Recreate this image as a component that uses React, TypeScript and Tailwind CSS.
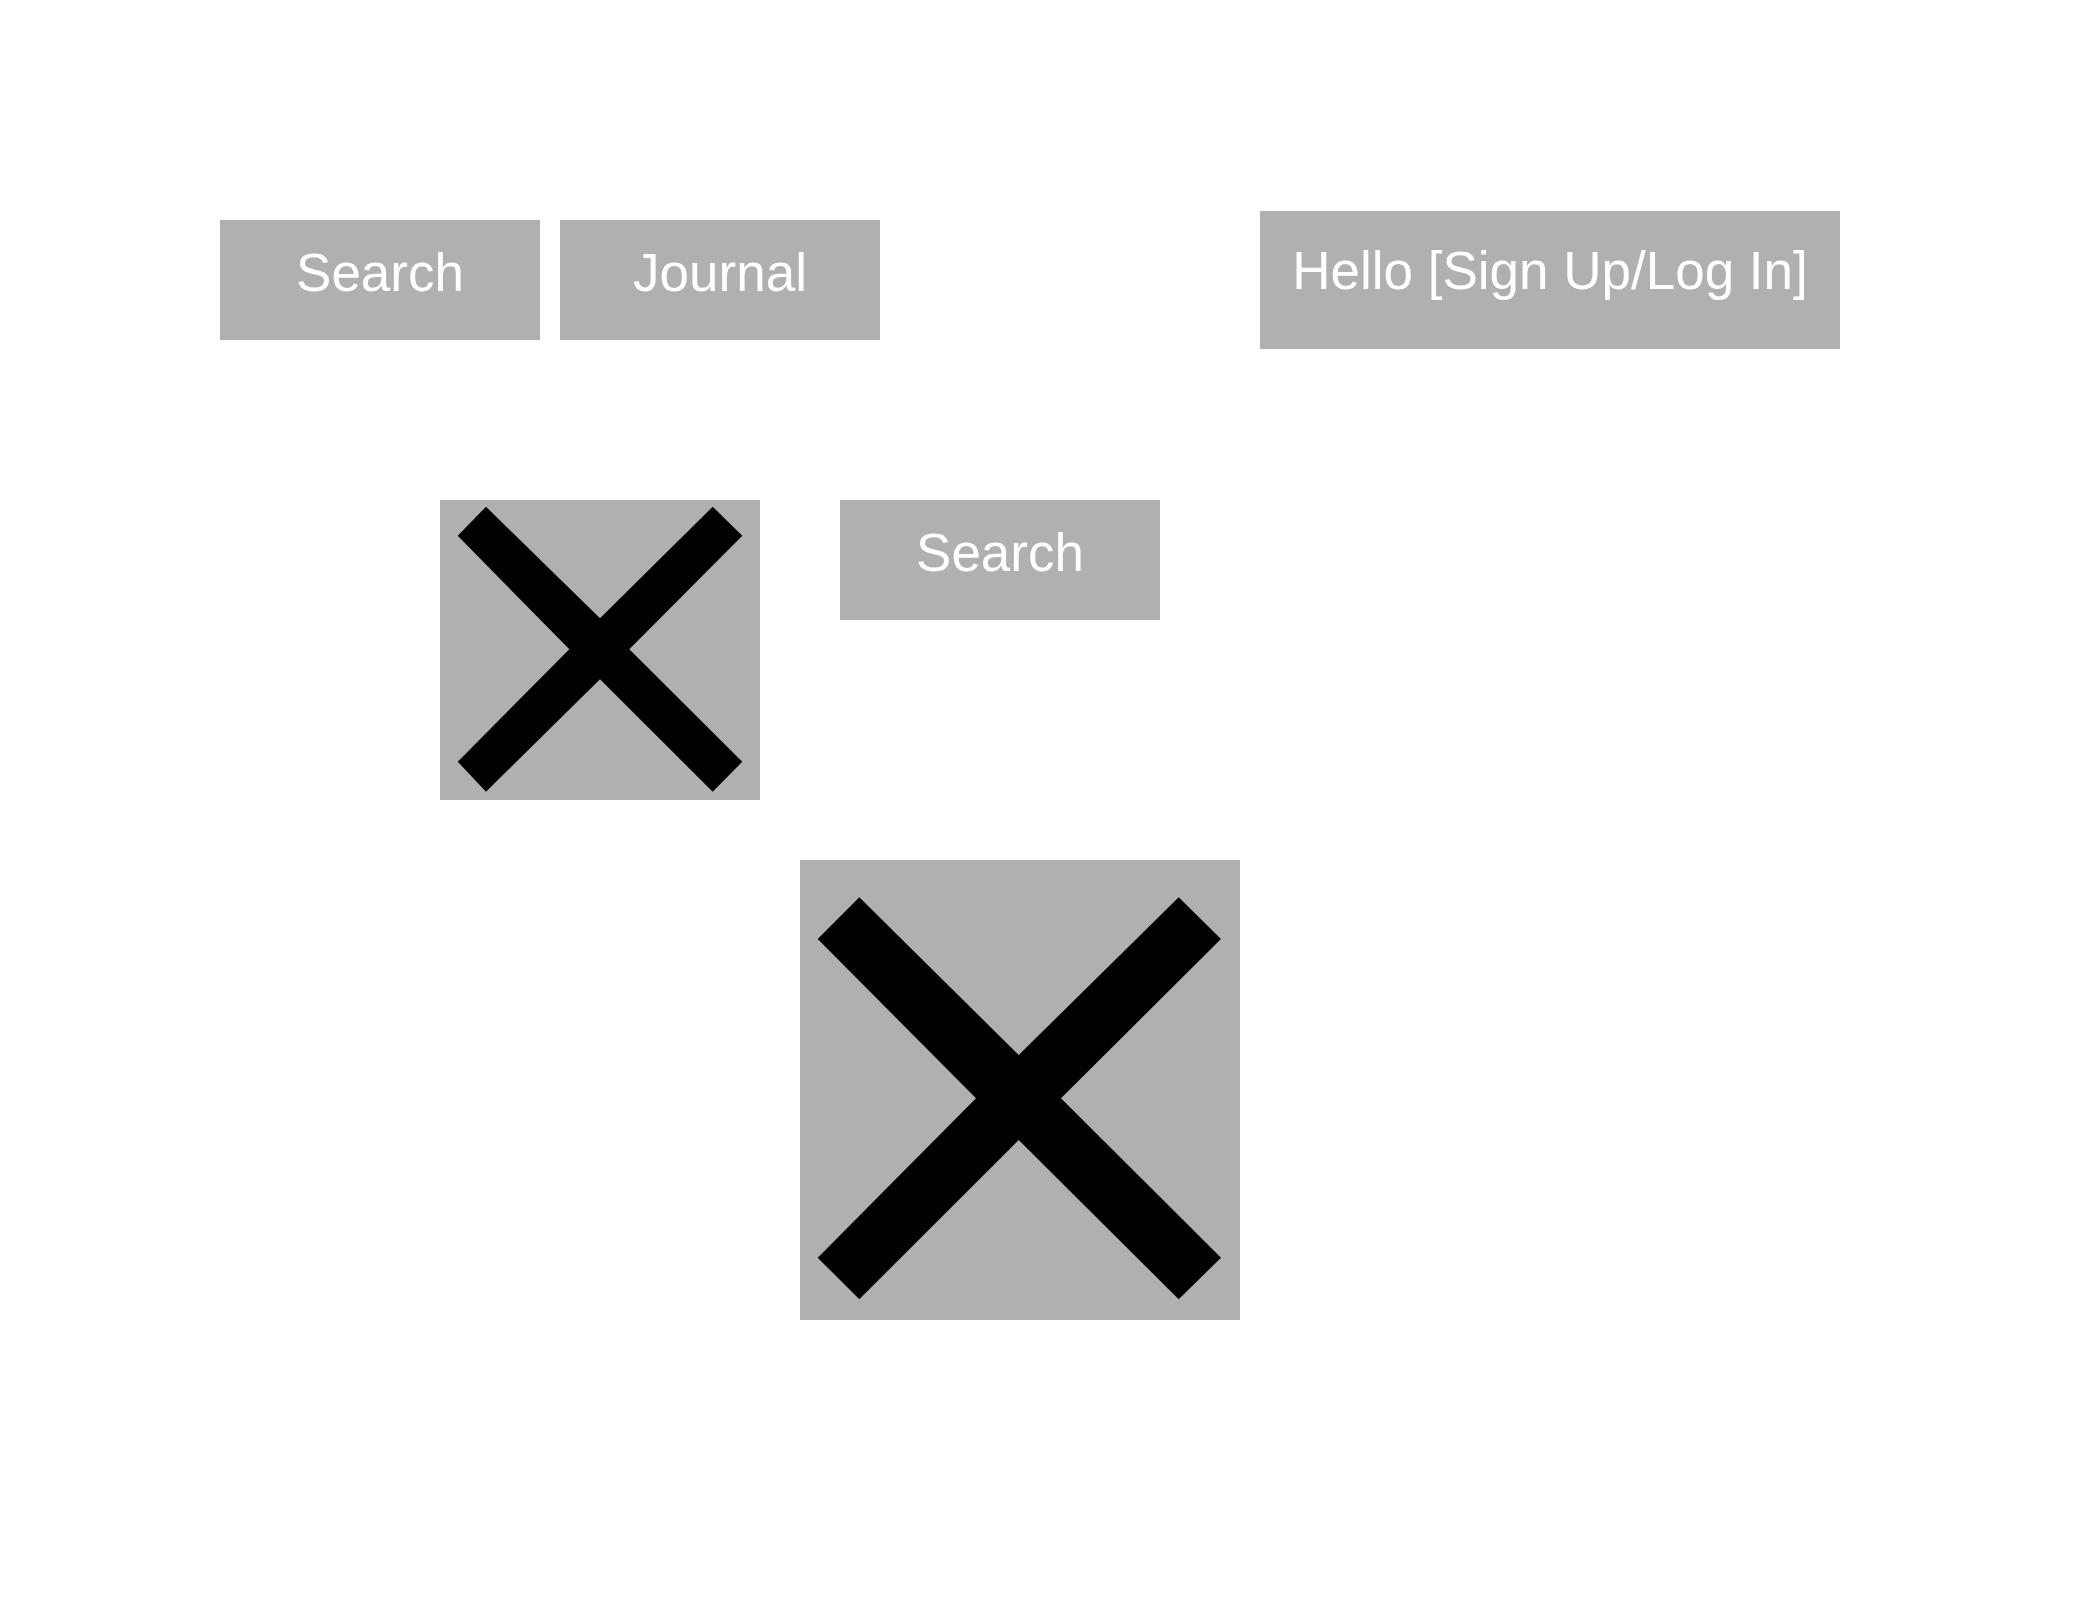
import React from "react";

const font = { fontFamily: '"Liberation Sans", Arial, sans-serif' };

function Btn({ label, cls }: { label: string; cls: string }) {
  return (
    <div className={`bg-[#b0b0b0] text-white text-[53px] leading-[58px] flex justify-center ${cls}`}>
      <span>{label}</span>
    </div>
  );
}

function XBox({ w, h, points, cls }: { w: number; h: number; points: string; cls: string }) {
  return (
    <div className={`bg-[#b0b0b0] ${cls}`}>
      <svg width={w} height={h} viewBox={`0 0 ${w} ${h}`} className="block">
        <polygon points={points} fill="#000" />
      </svg>
    </div>
  );
}

export default function App() {
  return (
    <div className="w-[2080px] h-[1600px] bg-white" style={font}>
      <div className="flex items-center pt-[211px] pl-[220px]">
        <Btn label="Search" cls="w-[320px] h-[120px] pt-[24px]" />
        <Btn label="Journal" cls="w-[320px] h-[120px] pt-[24px] ml-[20px]" />
        <Btn label="Hello [Sign Up/Log In]" cls="w-[580px] h-[138px] pt-[31px] ml-[380px]" />
      </div>
      <div className="flex items-start mt-[151px] pl-[440px]">
        <XBox
          w={320}
          h={300}
          cls="w-[320px] h-[300px]"
          points="17.7,35.7 46,6.7 160,118.3 272.7,6.7 302.3,35.7 189.3,149.3 302.3,261.7 272.7,291.7 160,179.3 46,291.7 17.7,261.7 129.3,149.3"
        />
        <Btn label="Search" cls="w-[320px] h-[120px] pt-[24px] ml-[80px]" />
      </div>
      <div className="flex mt-[60px] pl-[800px]">
        <XBox
          w={440}
          h={460}
          cls="w-[440px] h-[460px]"
          points="17.7,79 59.3,37.3 218.7,195 378.7,37.3 421,79 261,238.3 421,397.7 378.7,439.3 218.7,280 59.3,439.3 17.7,397.7 176,238.3"
        />
      </div>
    </div>
  );
}
